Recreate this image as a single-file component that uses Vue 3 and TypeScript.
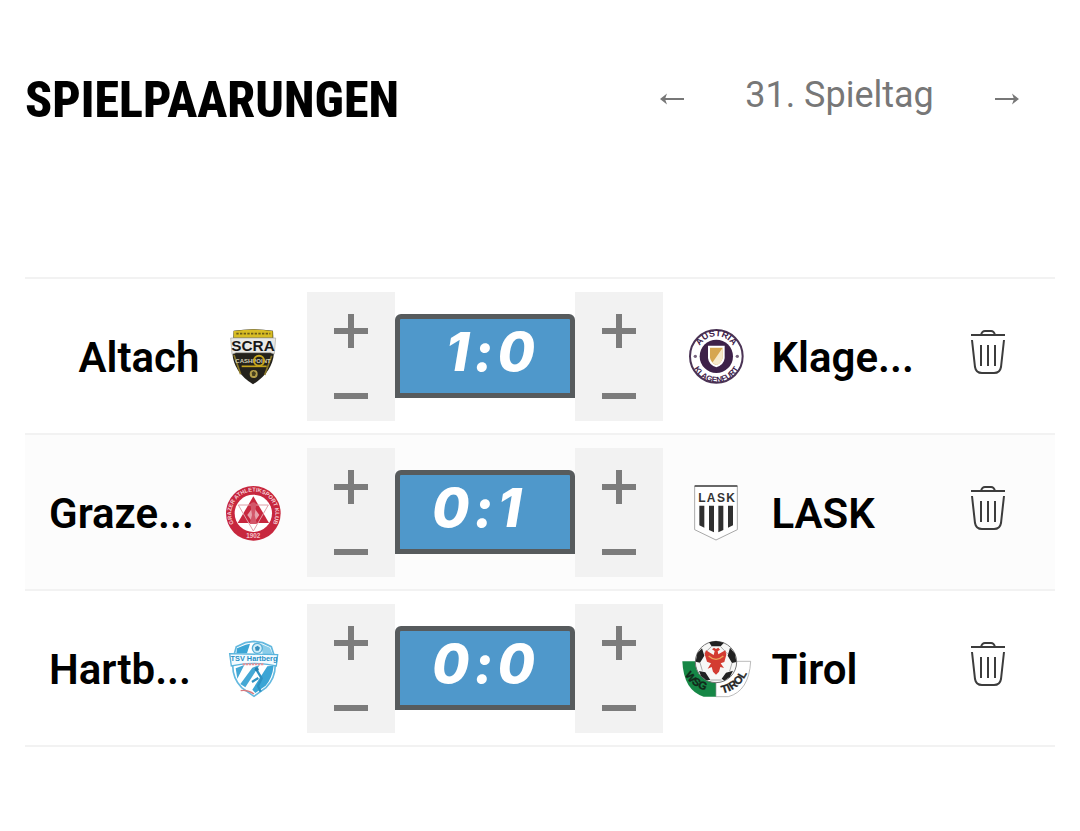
<script setup lang="ts">
import { ref } from 'vue'

type CrestName = 'altach' | 'klagenfurt' | 'gak' | 'lask' | 'hartberg' | 'tirol'

interface Side {
  name: string
  crest: CrestName
  goals: number
}

interface Match {
  id: number
  home: Side
  away: Side
}

const matchday = ref(31)

const matches = ref<Match[]>([
  { id: 1, home: { name: 'Altach', crest: 'altach', goals: 1 }, away: { name: 'Klage...', crest: 'klagenfurt', goals: 0 } },
  { id: 2, home: { name: 'Graze...', crest: 'gak', goals: 0 }, away: { name: 'LASK', crest: 'lask', goals: 1 } },
  { id: 3, home: { name: 'Hartb...', crest: 'hartberg', goals: 0 }, away: { name: 'Tirol', crest: 'tirol', goals: 0 } },
])

function step(side: Side, delta: number) {
  side.goals = Math.max(0, side.goals + delta)
}

function reset(match: Match) {
  match.home.goals = 0
  match.away.goals = 0
}
</script>

<template>
  <main class="page">
    <header class="head">
      <h1 class="title">SPIELPAARUNGEN</h1>
      <nav class="pager" aria-label="Spieltag">
        <button class="arrow" type="button" aria-label="Vorheriger Spieltag" @click="matchday--">
          <svg width="26" height="14" viewBox="0 0 26 14"><path d="M25 7H3" /><path class="tip" d="M1 7L8 1.5L6 7L8 12.5Z" /></svg>
        </button>
        <span class="day">{{ matchday }}. Spieltag</span>
        <button class="arrow" type="button" aria-label="Nächster Spieltag" @click="matchday++">
          <svg width="26" height="14" viewBox="0 0 26 14"><path d="M1 7H23" /><path class="tip" d="M25 7L18 1.5L20 7L18 12.5Z" /></svg>
        </button>
      </nav>
    </header>

    <ul class="matches">
      <li v-for="match in matches" :key="match.id" class="match">
        <template v-for="(side, i) in [match.home, match.away]" :key="side.crest">
          <span class="name" :class="[i === 0 ? 'home-name' : 'away-name', { shortened: side.name.endsWith('...') }]">{{ side.name }}</span>

          <span class="crest" :class="i === 0 ? 'home-crest' : 'away-crest'">
            <svg v-if="side.crest === 'altach'" width="80" height="80" viewBox="-4 4 240 240" aria-hidden="true">
              <path d="M58 45Q117 36 176 45L179 112Q174 170 116 206Q58 170 54 112Z" fill="#24221c" />
              <path d="M58 46Q117 37 175 46V66H58Z" fill="#d8bd24" />
              <path d="M66 54H168" stroke="#6b5c17" stroke-width="5" stroke-dasharray="7 4" />
              <path d="M59 118L79 176M172 120L151 178" stroke="#8b7829" stroke-width="5" />
              <path d="M49 67H184L180 115L168 111H65L53 116Z" fill="#e9e9e7" stroke="#aaa9a0" stroke-width="2" />
              <text x="116" y="107" text-anchor="middle" font-size="46" font-weight="700" fill="#171717">SCRA</text>
              <text x="116" y="142" text-anchor="middle" font-size="18" font-weight="700" fill="#d6d1b8">CASHPOINT</text>
              <circle cx="134" cy="135" r="15" fill="none" stroke="#c5a51c" stroke-width="6" />
              <path d="M82 152H157" stroke="#c5a51c" stroke-width="5" />
              <circle cx="118" cy="175" r="12" fill="#b5a04a" /><path d="M112 171L118 166L125 172L122 181H114Z" fill="#48411f" />
            </svg>

            <svg v-else-if="side.crest === 'gak'" width="80" height="80" viewBox="-6 6 240 240" aria-hidden="true">
              <circle cx="115" cy="127" r="82" fill="#c7273e" />
              <circle cx="115" cy="127" r="56" fill="#fff" />
              <path d="M115 76L162 156H68Z" fill="#c7273e" />
              <path d="M70 102H160L115 180Z" fill="none" stroke="#e0a0aa" stroke-width="3" />
              <path d="M115 156L100 130H130Z" fill="#f0c4ca" />
              <path d="M115 107L133 132L115 157L97 132Z" fill="#e7a2ac" />
              <path d="M106 99Q115 89 124 99L119 132L126 159H104L111 132Z" fill="#d3576a" />
              <path id="gak-ring" d="M62 167A66 66 0 1 1 168 167" fill="none" />
              <text font-size="17" font-weight="700" fill="#f6cfd5" text-anchor="middle"><textPath href="#gak-ring" startOffset="50%">GRAZER ATHLETIKSPORT KLUB</textPath></text>
              <text x="115" y="202" text-anchor="middle" font-size="19" font-weight="700" fill="#f3c3ca">1902</text>
            </svg>

            <svg v-else-if="side.crest === 'hartberg'" width="80" height="80" viewBox="-6 2 240 240" aria-hidden="true">
              <path d="M64 55L91 43L117 39L143 43L169 55L177 80Q191 140 153 178L117 204L80 178Q43 140 57 80Z" fill="#fff" stroke="#64b9df" stroke-width="5" />
              <path d="M66 60L92 49L105 46L96 75H64Z" fill="#3ba5d5" />
              <path d="M139 47L165 58L173 78H143Z" fill="#8bcde9" />
              <circle cx="127" cy="60" r="15" fill="#d3eef8" stroke="#57afd7" stroke-width="4" /><path d="M120 57L128 52L135 58L131 67H122Z" fill="#368fbd" />
              <path d="M62 120L88 110L67 151ZM112 118L134 110L91 177L76 167Z" fill="#45a8d5" />
              <path d="M157 114L176 112Q172 148 152 172L121 194L112 184Z" fill="#3ba5d5" />
              <path d="M126 127L140 150L129 173L137 190M130 149L111 161" fill="none" stroke="#2e91c1" stroke-width="7" />
              <circle cx="125" cy="123" r="6" fill="#237fae" />
              <path d="M44 76L188 79L184 113L157 108Q116 102 77 108L49 113Z" fill="#f3fbff" stroke="#5ab4dc" stroke-width="4" />
              <text x="117" y="99" text-anchor="middle" font-size="22" font-weight="700" fill="#288fc4">TSV Hartberg</text>
              <path d="M83 108H147" stroke="#e79197" stroke-width="6" stroke-dasharray="7 2" />
              <path d="M77 187Q98 183 117 197" fill="none" stroke="#d8797e" stroke-width="4" />
            </svg>

            <svg v-else-if="side.crest === 'klagenfurt'" width="80" height="80" viewBox="6 4 240 240" aria-hidden="true">
              <circle cx="124" cy="122" r="79" fill="#fff" stroke="#4b3455" stroke-width="6" />
              <circle cx="124" cy="122" r="50" fill="#3d2149" />
              <path d="M99 90H149V127Q147 147 124 155Q101 147 99 127Z" fill="#fff" />
              <path d="M105 96H143V126Q140 142 124 148Q108 142 105 126Z" fill="#d6a650" />
              <path d="M143 96V126Q140 142 124 148L112 141Z" fill="#f6e9cb" />
              <path id="klu-top" d="M68 108A57 57 0 0 1 180 108" fill="none" />
              <path id="klu-bottom" d="M50 137A75 75 0 0 0 198 137" fill="none" />
              <text font-size="27" font-weight="700" fill="#3d2149" text-anchor="middle"><textPath href="#klu-top" startOffset="50%">AUSTRIA</textPath></text>
              <text font-size="24" font-weight="700" fill="#3d2149" text-anchor="middle"><textPath href="#klu-bottom" startOffset="50%">KLAGENFURT</textPath></text>
              <circle cx="61" cy="122" r="5" fill="#76647d" /><circle cx="187" cy="122" r="5" fill="#76647d" />
            </svg>

            <svg v-else-if="side.crest === 'lask'" width="80" height="80" viewBox="6 7 240 240" aria-hidden="true">
              <path d="M59 46H187V177L123 208L59 177Z" fill="#fff" stroke="#a9a9a9" stroke-width="3" />
              <path d="M59 46H187" stroke="#444" stroke-width="4" />
              <g font-size="36" font-weight="700" fill="#333" text-anchor="middle"><text x="81" y="93">L</text><text x="108" y="93">A</text><text x="138" y="93">S</text><text x="167" y="93">K</text></g>
              <path d="M73 105H88V171L73 164ZM102 105H117V185L102 178ZM130 105H145V178L130 185ZM159 105H174V164L159 171Z" fill="#303030" />
            </svg>

            <svg v-else width="80" height="80" viewBox="6 2 240 240" aria-hidden="true">
              <path d="M22 99H123V205H86Q26 187 22 99Z" fill="#168746" />
              <path d="M123 99H227Q222 188 160 205H123Z" fill="#fff" stroke="#999" stroke-width="2" />
              <circle cx="123" cy="101" r="62" fill="#f7f7f6" stroke="#777" stroke-width="3" />
              <path d="M102 42L123 38L147 43L137 54H110ZM67 75L81 60L88 82L75 103L62 100ZM165 58L180 76L184 101L171 104L158 82ZM72 128L91 132L106 155L93 155L78 143ZM174 127L165 145L148 157L140 151L153 133Z" fill="#222" />
              <path d="M110 54L88 75M136 54L158 77M75 103L82 127M171 104L164 128M106 155H140" stroke="#aaa" stroke-width="3" />
              <path d="M119 68L111 63L117 58L123 62L130 58L135 64L128 69L130 78L151 66L154 79L148 101L137 105L147 119L136 116L132 130L123 139L114 130L110 116L98 121L108 105L96 100L89 78L93 66L116 80Z" fill="#d33c32" />
              <path d="M101 83Q123 103 145 83" fill="none" stroke="#eca65d" stroke-width="4" />
              <path id="wsg-left" d="M30 139Q50 178 104 190" fill="none" />
              <path id="wsg-right" d="M142 195Q199 183 222 122" fill="none" />
              <text font-size="33" font-weight="700" fill="#12291a" stroke="#12291a"><textPath href="#wsg-left">WSG</textPath></text>
              <text font-size="33" font-weight="700" fill="#252525" stroke="#252525"><textPath href="#wsg-right">TIROL</textPath></text>
            </svg>
          </span>

          <span class="stepper" :class="i === 0 ? 'home-step' : 'away-step'">
            <button class="plus" type="button" :aria-label="'Tor hinzufügen: ' + side.name" @click="step(side, 1)">
              <svg width="34" height="34" viewBox="0 0 34 34"><path d="M0 17H34M17 0V34" /></svg>
            </button>
            <button class="minus" type="button" :aria-label="'Tor abziehen: ' + side.name" @click="step(side, -1)">
              <svg width="34" height="6" viewBox="0 0 34 6"><path d="M0 3H34" /></svg>
            </button>
          </span>
        </template>

        <span class="score">
          <span class="goals">{{ match.home.goals }}</span>
          <span class="colon">:</span>
          <span class="goals away-goals">{{ match.away.goals }}</span>
        </span>

        <button class="trash" type="button" aria-label="Ergebnis löschen" @click="reset(match)">
          <svg width="36" height="46" viewBox="0 0 36 46">
            <path d="M1 6H35M11 6Q12 2 15 2H21Q24 2 25 6M2 11L5 38Q6 44 12 44H24Q30 44 31 38L34 11M11 16V37M18 16V37M25 16V37" />
          </svg>
        </button>
      </li>
    </ul>
  </main>
</template>

<style>
body {
  margin: 0;
  background: #fff;
}
</style>

<style scoped>
.page {
  padding: 64px 25px;
  font-family: Roboto, "Noto Sans", sans-serif;
  color: #000;
}

button {
  display: flex;
  align-items: center;
  justify-content: center;
  padding: 0;
  border: 0;
  background: none;
  cursor: pointer;
}

svg {
  display: block;
  flex: none;
}

.head {
  display: flex;
  align-items: center;
  justify-content: space-between;
  height: 70px;
  margin-bottom: 143px;
}

.title {
  margin: 0;
  padding-top: 2px;
  font-family: "Roboto Condensed", "Open Sans Condensed", sans-serif;
  font-size: 50px;
  font-weight: 800;
  line-height: 70px;
}

.pager {
  display: flex;
  align-items: center;
  flex: 0 1 431px;
  color: #777;
}

.arrow {
  flex: none;
  width: 96px;
  height: 70px;
}

.arrow path {
  fill: none;
  stroke: #777;
  stroke-width: 2;
}

.arrow .tip {
  fill: #777;
  stroke: none;
}

.day {
  flex: 1;
  padding-bottom: 8px;
  font-size: 36px;
  line-height: 48px;
  text-align: center;
  white-space: nowrap;
}

.matches {
  margin: 0;
  padding: 0;
  border-bottom: 2px solid #f2f2f2;
  list-style: none;
}

.match {
  display: grid;
  grid-template-columns: minmax(0, 7fr) 108px 88px 180px 88px 108px minmax(0, 6fr) 134px;
  grid-template-areas: "hname hcrest hstep score astep acrest aname trash";
  align-items: center;
  padding: 13px 0 12px;
  border-top: 2px solid #f2f2f2;
}

.match:nth-child(even) {
  background: #fcfcfc;
}

.name {
  padding-top: 2px;
  font-size: 42px;
  font-weight: 600;
  line-height: 56px;
  white-space: nowrap;
}

.home-name {
  grid-area: hname;
  padding-left: 24px;
  text-align: right;
}

.home-name.shortened {
  text-align: left;
}

.away-name {
  grid-area: aname;
}

.crest {
  display: flex;
  justify-content: center;
  font-family: "Liberation Sans", sans-serif;
}

.home-crest {
  grid-area: hcrest;
}

.away-crest {
  grid-area: acrest;
}

.stepper {
  background: #f2f2f2;
}

.home-step {
  grid-area: hstep;
}

.away-step {
  grid-area: astep;
}

.stepper button {
  width: 100%;
}

.stepper .plus {
  height: 78px;
}

.stepper .minus {
  height: 51px;
}

.stepper path {
  stroke: #7c7c7c;
  stroke-width: 6;
}

.score {
  grid-area: score;
  display: grid;
  grid-template-columns: 1fr 28px 1fr;
  box-sizing: border-box;
  height: 84px;
  margin-bottom: 2px;
  padding: 0 6px 0 2px;
  border: 5px solid #575b5d;
  border-radius: 6px 6px 0 0;
  background: #4f98cb;
  color: #fff;
  font-family: Inter, sans-serif;
  font-size: 54px;
  font-style: italic;
  font-weight: 800;
  line-height: 66px;
}

.goals {
  text-align: right;
}

.away-goals {
  text-align: left;
}

.colon {
  text-align: center;
}

.trash {
  grid-area: trash;
  height: 88px;
  padding-bottom: 10px;
}

.trash path {
  fill: none;
  stroke: #3c3c3c;
  stroke-width: 2;
}
</style>
